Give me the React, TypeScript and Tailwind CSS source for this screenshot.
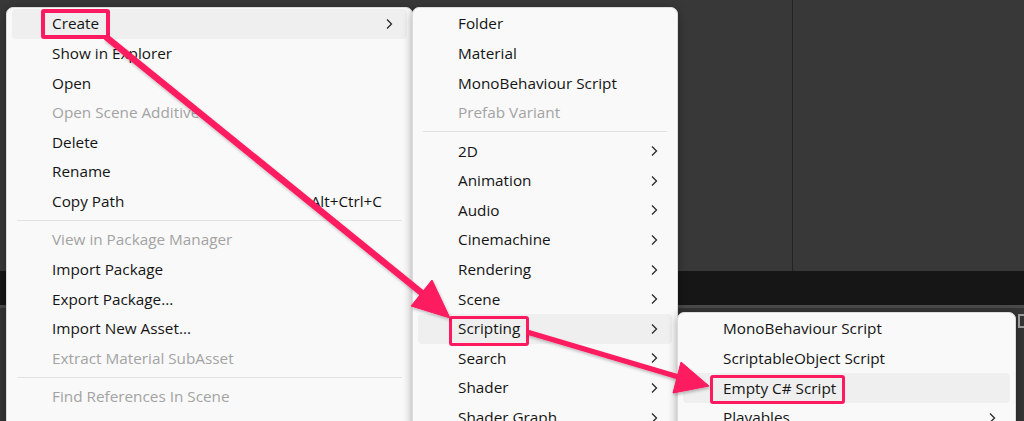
import React from 'react';

type Item =
  | { kind: 'sep' }
  | {
      kind?: 'item';
      label: string;
      disabled?: boolean;
      sub?: boolean;
      shortcut?: string;
      active?: boolean;
      mark?: string; // tailwind classes for the red annotation box
    };

const PINK = '#fd1a60';

const mainMenu: Item[] = [
  { label: 'Create', sub: true, active: true, mark: 'left-[29px] top-0 w-[69px] h-[30px] border-[4px]' },
  { label: 'Show in Explorer' },
  { label: 'Open' },
  { label: 'Open Scene Additive', disabled: true },
  { label: 'Delete' },
  { label: 'Rename' },
  { label: 'Copy Path', shortcut: 'Alt+Ctrl+C' },
  { kind: 'sep' },
  { label: 'View in Package Manager', disabled: true },
  { label: 'Import Package' },
  { label: 'Export Package...' },
  { label: 'Import New Asset...' },
  { label: 'Extract Material SubAsset', disabled: true },
  { kind: 'sep' },
  { label: 'Find References In Scene', disabled: true },
  { label: 'Select Dependencies' },
];

const createMenu: Item[] = [
  { label: 'Folder' },
  { label: 'Material' },
  { label: 'MonoBehaviour Script' },
  { label: 'Prefab Variant', disabled: true },
  { kind: 'sep' },
  { label: '2D', sub: true },
  { label: 'Animation', sub: true },
  { label: 'Audio', sub: true },
  { label: 'Cinemachine', sub: true },
  { label: 'Rendering', sub: true },
  { label: 'Scene', sub: true },
  { label: 'Scripting', sub: true, active: true, mark: 'left-[31px] top-[2px] w-[80px] h-[30px] border-[3px]' },
  { label: 'Search', sub: true },
  { label: 'Shader', sub: true },
  { label: 'Shader Graph', sub: true },
];

const scriptingMenu: Item[] = [
  { label: 'MonoBehaviour Script' },
  { label: 'ScriptableObject Script' },
  { label: 'Empty C# Script', active: true, mark: 'left-[27px] top-[2px] w-[135px] h-[29px] border-[3px]' },
  { label: 'Playables', sub: true },
];

const Chevron = () => (
  <svg width="8" height="12" viewBox="0 0 8 12" className="shrink-0">
    <path d="M2 1.5 L6.5 6 L2 10.5" fill="none" stroke="#2a2a2a" strokeWidth="1.3" />
  </svg>
);

const Menu = ({ items, className }: { items: Item[]; className: string }) => (
  <div
    className={`absolute rounded-[7px] bg-[#f9f9f9] border border-[#dcdcdc] shadow-[0_2px_10px_rgba(0,0,0,0.35)] px-[5px] pt-[1px] ${className}`}
  >
    {items.map((it, i) =>
      it.kind === 'sep' ? (
        <div key={i} className="h-[9px] flex items-center px-[5px]">
          <div className="h-px w-full bg-[#e2e2e2]" />
        </div>
      ) : (
        <div
          key={i}
          className={`relative h-[29.6px] flex items-center pl-[40px] pr-[14px] rounded-[4px] ${
            it.active ? 'bg-[#efefef]' : ''
          } ${it.disabled ? 'text-[#a3a3a3]' : 'text-[#141414]'}`}
        >
          <span className="flex-1 whitespace-nowrap">{it.label}</span>
          {it.shortcut && <span className="mr-[11px] whitespace-nowrap">{it.shortcut}</span>}
          {it.sub && <Chevron />}
          {it.mark && (
            <div
              className={`absolute rounded-[3px] border-[#fd1a60] pointer-events-none ${it.mark}`}
            />
          )}
        </div>
      )
    )}
  </div>
);

export default function App() {
  return (
    <div className="relative w-[1024px] h-[421px] overflow-hidden bg-[#383838] text-[15.3px] font-['Open_Sans',sans-serif]">
      {/* editor panels behind the menus */}
      <div className="flex flex-col h-full">
        <div className="h-[271px] flex">
          <div className="w-[793px] bg-[#383838] border-r border-[#232323]" />
          <div className="flex-1 bg-[#383838]" />
        </div>
        <div className="h-[34px] bg-[#161616]" />
        <div className="h-[3px] bg-[#4a4a4a]" />
        <div className="flex-1 bg-[#353535]" />
      </div>

      <Menu items={mainMenu} className="left-[6px] top-[7px] w-[407px]" />
      <Menu items={createMenu} className="left-[412px] top-[7px] w-[266px]" />
      <Menu items={scriptingMenu} className="left-[677px] top-[312px] w-[339px]" />

      {/* small toolbar icon peeking past the last menu */}
      <div className="absolute left-[1018px] top-[314px] w-[6px] h-[14px] border-y-2 border-l-2 border-[#9a9a9a]" />

      {/* annotation arrows */}
      <svg className="absolute inset-0 pointer-events-none" width="1024" height="421" viewBox="0 0 1024 421">
        <defs>
          <filter id="sh" x="-10%" y="-10%" width="120%" height="120%">
            <feDropShadow dx="1" dy="2" stdDeviation="1.5" floodColor="#000" floodOpacity="0.25" />
          </filter>
        </defs>
        <g fill={PINK} stroke={PINK} filter="url(#sh)">
          <line x1="106" y1="37" x2="428" y2="298" strokeWidth="6.5" />
          <polygon points="450,318 411,306 432,280" strokeWidth="1" />
          <line x1="527" y1="332" x2="682" y2="378" strokeWidth="5" />
          <polygon points="709,386 673,393 681,362" strokeWidth="1" />
        </g>
      </svg>
    </div>
  );
}
